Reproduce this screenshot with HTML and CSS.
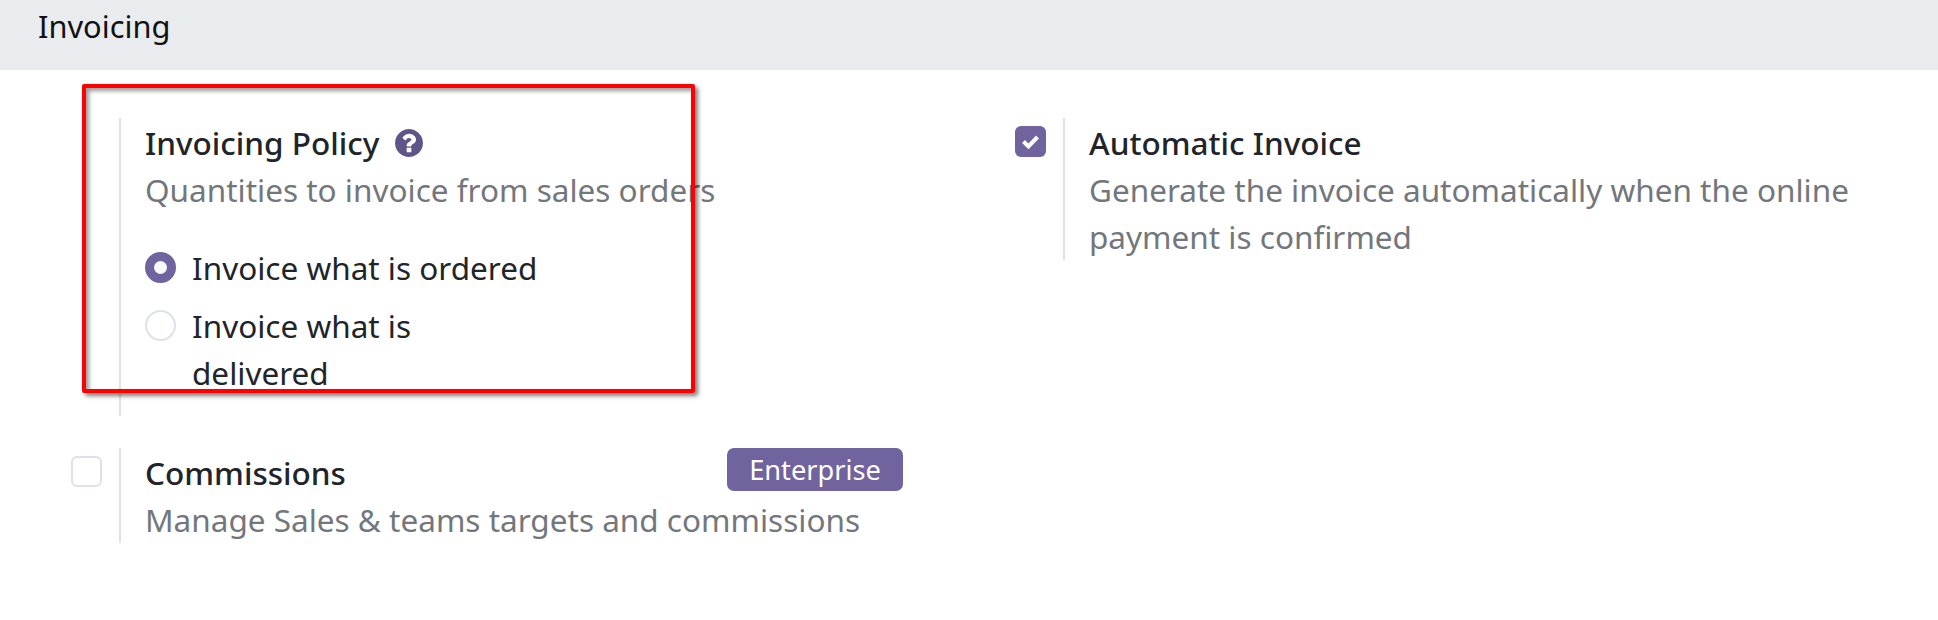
FILE: index.html
```html
<!DOCTYPE html>
<html lang="en">
<head>
    <meta charset="UTF-8">
    <title>Invoicing Settings</title>
    <link rel="stylesheet" href="styles.css">
</head>
<body>
    <h2 class="section-title">Invoicing</h2>

    <div class="settings">
        <!-- Invoicing policy -->
        <div class="setting">
            <div class="setting-check"></div>
            <div class="setting-body policy-body">
                <div class="setting-title">
                    <span>Invoicing Policy</span>
                    <svg class="help-icon" viewBox="0 0 1536 1536"><path d="M896 1248v-192q0-14-9-23t-23-9h-192q-14 0-23 9t-9 23v192q0 14 9 23t23 9h192q14 0 23-9t9-23zm256-672q0-88-55.5-163t-138.5-116-170-41q-243 0-371 213-15 24 8 42l132 100q7 6 19 6 16 0 25-12 53-68 86-92 34-24 86-24 48 0 85.5 26t37.5 59q0 38-20 61t-68 45q-63 28-115.5 86.5t-52.5 125.5v36q0 14 9 23t23 9h192q14 0 23-9t9-23q0-19 21.5-49.5t54.5-49.5q32-18 49-28.5t46-35 44.5-48 28-60.5 12.5-81zm384 192q0 209-103 385.5t-279.5 279.5-385.5 103-385.5-103-279.5-279.5-103-385.5 103-385.5 279.5-279.5 385.5-103 385.5 103 279.5 279.5 103 385.5z"/></svg>
                </div>
                <div class="setting-desc">Quantities to invoice from sales orders</div>
                <div class="radio-list">
                    <div class="radio-row">
                        <span class="radio checked"></span>
                        <span class="radio-label">Invoice what is ordered</span>
                    </div>
                    <div class="radio-row">
                        <span class="radio"></span>
                        <span class="radio-label">Invoice what is delivered</span>
                    </div>
                </div>
            </div>
        </div>

        <!-- Automatic invoice -->
        <div class="setting">
            <div class="setting-check">
                <span class="checkbox checked">
                    <svg viewBox="0 0 31 31"><path d="M8.5 15.5l5 5 9-9.5"/></svg>
                </span>
            </div>
            <div class="setting-body">
                <div class="setting-title">Automatic Invoice</div>
                <div class="setting-desc">Generate the invoice automatically when the online payment is confirmed</div>
            </div>
        </div>

        <!-- Commissions -->
        <div class="setting">
            <div class="setting-check">
                <span class="checkbox"></span>
            </div>
            <div class="setting-body">
                <div class="setting-title title-split">
                    <span>Commissions</span>
                    <span class="badge">Enterprise</span>
                </div>
                <div class="setting-desc">Manage Sales &amp; teams targets and commissions</div>
            </div>
        </div>
    </div>

    <!-- Red annotation box -->
    <div class="highlight"></div>
</body>
</html>
```

FILE: styles.css
```css
body {
    font-family: "Noto Sans", sans-serif;
    margin: 0;
    background-color: white;
    color: #212529;
}

.section-title {
    margin: 0;
    height: 70px;
    padding: 6px 0 0 38px;
    box-sizing: border-box;
    background-color: #e9ecef;
    font-size: 30.8px;
    font-weight: 400;
    line-height: 40px;
    color: #111;
}

.settings {
    display: grid;
    grid-template-columns: 944px 943px;
    row-gap: 32px;
    padding: 48px 0 0 56px;
}

.setting {
    display: flex;
    align-items: flex-start;
}

.setting-check {
    width: 63px;
    flex-shrink: 0;
    padding: 8px 0 0 15px;
    box-sizing: border-box;
}

.setting-body {
    width: 760px;
    padding: 1px 0 0 24px;
    border-left: 2px solid #dee2e6;
}

.policy-body {
    padding-bottom: 20px;
}

.setting-title {
    display: flex;
    align-items: center;
    gap: 16px;
    font-size: 31.5px;
    font-weight: 500;
    line-height: 47px;
}

.title-split {
    justify-content: space-between;
}

.help-icon {
    width: 28px;
    height: 28px;
    fill: #5f5589;
}

.setting-desc {
    font-size: 31.5px;
    line-height: 47px;
    color: #73777c;
}

.badge {
    align-self: flex-start;
    width: 176px;
    height: 43px;
    margin-top: -1px;
    margin-right: 2px;
    border-radius: 7px;
    background-color: #71639e;
    color: white;
    font-size: 27.2px;
    font-weight: 400;
    line-height: 43px;
    text-align: center;
}

.radio-list {
    display: flex;
    flex-direction: column;
    gap: 11px;
    margin-top: 31px;
}

.radio-row {
    display: flex;
    gap: 16px;
    font-size: 31.5px;
    line-height: 47px;
}

.radio-label {
    max-width: 350px;
}

.radio {
    width: 31px;
    height: 31px;
    margin-top: 8px;
    flex-shrink: 0;
    box-sizing: border-box;
    border: 2px solid #dee2e6;
    border-radius: 50%;
    background-color: white;
}

.radio.checked {
    border: 9px solid #71639e;
    background-color: #f8f9fa;
}

.checkbox {
    display: block;
    width: 31px;
    height: 31px;
    box-sizing: border-box;
    border: 2px solid #dee2e6;
    border-radius: 6px;
    background-color: white;
}

.checkbox.checked {
    border: none;
    background-color: #71639e;
}

.checkbox svg {
    display: block;
    width: 31px;
    height: 31px;
    fill: none;
    stroke: white;
    stroke-width: 4;
}

.highlight {
    position: absolute;
    top: 84px;
    left: 82px;
    width: 613px;
    height: 309px;
    box-sizing: border-box;
    border: 4px solid red;
    border-radius: 2px;
    box-shadow: 3px 3px 4px rgba(0,0,0,0.5), inset 3px 3px 4px rgba(0,0,0,0.4);
}
```
